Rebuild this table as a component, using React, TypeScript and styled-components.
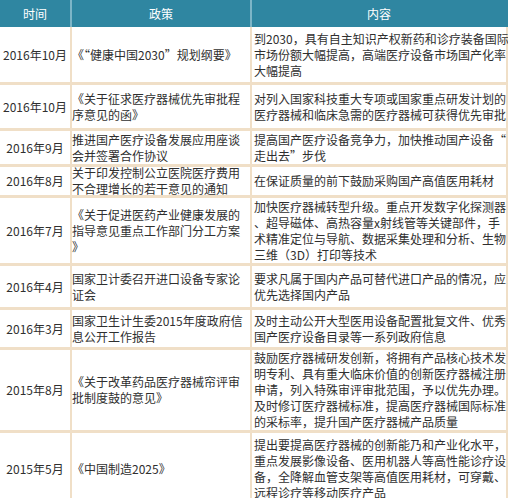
import React from 'react';
import styled, { createGlobalStyle } from 'styled-components';

const Global = createGlobalStyle`
  html, body { margin: 0; padding: 0; background: #ffffff; }
  body { font-family: "Noto Sans CJK SC", "Liberation Sans", sans-serif; }
`;

const Table = styled.div`
  width: 508px;
  height: 498px;
  overflow: hidden;
  display: grid;
  grid-template-columns: 72px 180px 256px;
  align-content: start;
`;

const HeadCell = styled.div<{ $last?: boolean }>`
  height: 27px;
  box-sizing: border-box;
  background: #2f86a1;
  color: #ffffff;
  font-size: 12px;
  display: flex;
  align-items: center;
  justify-content: center;
  border-right: 2px solid ${(p) => (p.$last ? '#2f86a1' : '#7db5c7')};
`;

type Kind = 'date' | 'policy' | 'content';

const Cell = styled.div<{ $h: number; $first?: boolean; $kind: Kind }>`
  height: ${(p) => p.$h}px;
  box-sizing: border-box;
  border-top: ${(p) => (p.$first ? 'none' : '3px solid #f0dfc7')};
  border-right: 2px solid #f0dfc7;
  display: flex;
  flex-direction: column;
  justify-content: center;
  align-items: ${(p) => (p.$kind === 'date' ? 'center' : 'flex-start')};
  padding-left: ${(p) => (p.$kind === 'content' ? 2 : 0)}px;
  font-size: 12px;
  line-height: 16px;
  color: #2f2f2f;
  white-space: nowrap;
  overflow: visible;
`;

const Line = styled.span`
  display: block;
`;

type Row = { h: number; date: string; policy: string; content: string };

const rows: Row[] = [
  {
    h: 55,
    date: '2016年10月',
    policy: '《“健康中国2030”规划纲要》',
    content: '到2030，具有自主知识产权新药和诊疗装备国际\n市场份额大幅提高，高端医疗设备市场国产化率\n大幅提高',
  },
  {
    h: 46,
    date: '2016年10月',
    policy: '《关于征求医疗器械优先审批程\n序意见的函》',
    content: '对列入国家科技重大专项或国家重点研发计划的\n医疗器械和临床急需的医疗器械可获得优先审批',
  },
  {
    h: 36,
    date: '2016年9月',
    policy: '推进国产医疗设备发展应用座谈\n会并签署合作协议',
    content: '提高国产医疗设备竞争力，加快推动国产设备“\n走出去”步伐',
  },
  {
    h: 31,
    date: '2016年8月',
    policy: '关于印发控制公立医院医疗费用\n不合理增长的若干意见的通知',
    content: '在保证质量的前下鼓励采购国产高值医用耗材',
  },
  {
    h: 68,
    date: '2016年7月',
    policy: '《关于促进医药产业健康发展的\n指导意见重点工作部门分工方案\n》',
    content: '加快医疗器械转型升级。重点开发数字化探测器\n、超导磁体、高热容量x射线管等关键部件，手\n术精准定位与导航、数据采集处理和分析、生物\n三维（3D）打印等技术',
  },
  {
    h: 44,
    date: '2016年4月',
    policy: '国家卫计委召开进口设备专家论\n证会',
    content: '要求凡属于国内产品可替代进口产品的情况，应\n优先选择国内产品',
  },
  {
    h: 40,
    date: '2016年3月',
    policy: '国家卫生计生委2015年度政府信\n息公开工作报告',
    content: '及时主动公开大型医用设备配置批复文件、优秀\n国产医疗设备目录等一系列政府信息',
  },
  {
    h: 83,
    date: '2015年8月',
    policy: '《关于改革药品医疗器械帘评审\n批制度鼓的意见》',
    content: '鼓励医疗器械研发创新，将拥有产品核心技术发\n明专利、具有重大临床价值的创新医疗器械注册\n申请，列入特殊审评审批范围，予以优先办理。\n及时修订医疗器械标准，提高医疗器械国际标准\n的采标率，提升国产医疗器械产品质量',
  },
  {
    h: 75,
    date: '2015年5月',
    policy: '《中国制造2025》',
    content: '提出要提高医疗器械的创新能乃和产业化水平，\n重点发展影像设备、医用机器人等高性能诊疗设\n备，全降解血管支架等高值医用耗材，可穿戴、\n远程诊疗等移动医疗产品',
  },
];

const Lines: React.FC<{ text: string }> = ({ text }) => (
  <>
    {text.split('\n').map((t, i) => (
      <Line key={i}>{t}</Line>
    ))}
  </>
);

export default function App() {
  return (
    <>
      <Global />
      <Table>
        <HeadCell>时间</HeadCell>
        <HeadCell>政策</HeadCell>
        <HeadCell $last>内容</HeadCell>
        {rows.map((r, i) => (
          <React.Fragment key={i}>
            <Cell $h={r.h} $first={i === 0} $kind="date">
              <Lines text={r.date} />
            </Cell>
            <Cell $h={r.h} $first={i === 0} $kind="policy">
              <Lines text={r.policy} />
            </Cell>
            <Cell $h={r.h} $first={i === 0} $kind="content">
              <Lines text={r.content} />
            </Cell>
          </React.Fragment>
        ))}
      </Table>
    </>
  );
}
